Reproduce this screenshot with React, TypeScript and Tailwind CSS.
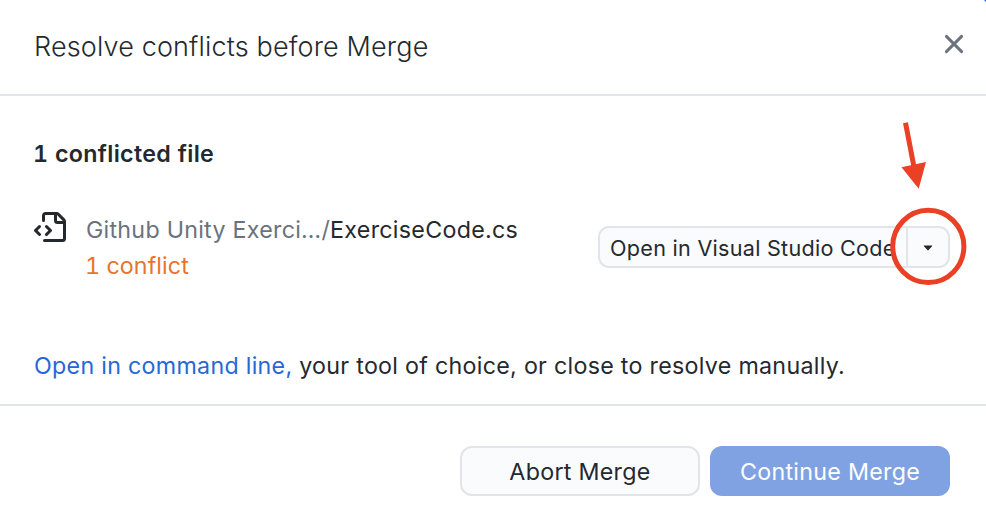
export default function App() {
  return (
    <main className="relative flex h-[530px] w-[986px] flex-col overflow-hidden bg-white font-['Inter',sans-serif] text-[23.25px] leading-[36px] tracking-[0.28px] text-[#24292e]">
      <header className="flex h-[96px] shrink-0 items-center justify-between border-b-2 border-[#e1e4e8] pr-[22px] pl-[34px]">
        <h1 className="text-[27px] font-[350] tracking-[0.15px] whitespace-nowrap">Resolve conflicts before Merge</h1>
        <button aria-label="Close" className="-mt-1.5 flex size-5 items-center justify-center">
          <svg viewBox="0 0 20 20" className="size-5" fill="none" stroke="#6a737d" strokeWidth="2.9" strokeLinecap="round"><path d="M2.4 2.4L17.6 17.6M17.6 2.4L2.4 17.6" /></svg>
        </button>
      </header>
      <section className="flex h-[310px] shrink-0 flex-col border-b-2 border-[#e1e4e8] pt-[40px] pr-[36px] pl-[34px]">
        <h2 className="-ml-px font-semibold tracking-[0.33px] whitespace-nowrap tabular-nums">1 conflicted file</h2>
        <div className="mt-[40px] flex h-[72px]">
          <svg viewBox="0 0 16 16" className="size-8 shrink-0" fill="#24292e">
            <path fillRule="evenodd" d="M4 1.75C4 .784 4.784 0 5.75 0h5.586c.464 0 .909.184 1.237.513l2.914 2.914c.329.328.513.773.513 1.237v8.586A1.75 1.75 0 0114.25 15h-9a.75.75 0 010-1.5h9a.25.25 0 00.25-.25V6h-2.75A1.75 1.75 0 0110 4.25V1.5H5.75a.25.25 0 00-.25.25v2.5a.75.75 0 01-1.5 0v-2.5zm7.5-.188V4.25c0 .138.112.25.25.25h2.688z" />
            <path d="M5.72 6.72a.75.75 0 000 1.06l1.47 1.47-1.47 1.47a.75.75 0 101.06 1.06l2-2a.75.75 0 000-1.06l-2-2a.75.75 0 00-1.06 0zM3.28 7.78a.75.75 0 00-1.06-1.06l-2 2a.75.75 0 000 1.06l2 2a.75.75 0 001.06-1.06L1.81 9.25l1.47-1.47z" />
          </svg>
          <div className="ml-5 flex flex-col whitespace-nowrap">
            <p><span className="tracking-[0.26px] text-[#6a737d]">Github Unity Exerci…/</span>ExerciseCode.cs</p>
            <p className="-ml-px tracking-[0.08px] text-[#e8742c] tabular-nums">1 conflict</p>
          </div>
          <div className="mt-[14px] ml-auto flex h-[42px] w-[352px] rounded-[11px] border-2 border-[#e1e4e8] bg-[#fafbfc] text-[21.6px] tracking-[0.27px]">
            <span className="flex w-[306px] items-center overflow-hidden pt-[2px] pl-[10px] whitespace-nowrap">Open in Visual Studio Code</span>
            <span className="flex flex-1 items-center justify-center border-l-2 border-[#e1e4e8] pt-[2px] pr-px">
              <svg viewBox="0 0 10 6" className="h-[6px] w-[10px]"><path d="M1.2.5h7.6q1 0 .3.7L5.6 4.9q-.6.6-1.2 0L.9 1.2Q.2.5 1.2.5z" fill="#24292e" /></svg>
            </span>
          </div>
        </div>
        <p className="mt-[64px] whitespace-nowrap"><span className="text-[#2768d5]">Open in command line,</span> your tool of choice, or close to resolve manually.</p>
      </section>
      <footer className="flex justify-end gap-[10px] pt-[40px] pr-[36px]">
        <button className="h-[50px] w-[240px] rounded-[12px] border-2 border-[#e1e4e8] bg-[#fafbfc] pt-[2px]">Abort Merge</button>
        <button className="h-[50px] w-[240px] rounded-[12px] bg-[#80a2e2] pt-[2px] text-white">Continue Merge</button>
      </footer>
      <svg viewBox="0 0 100 180" className="absolute top-[115px] left-[880px] h-[180px] w-[100px]">
        <ellipse cx="48.3" cy="131.4" rx="35.6" ry="36.1" fill="none" stroke="#ea4025" strokeWidth="5" />
        <path d="M25.5 7.7L33.8 51" stroke="#ea4025" strokeWidth="5" />
        <path d="M21.5 52.3L46 47l-7.3 26.8z" fill="#ea4025" />
      </svg>
      <svg viewBox="0 0 2 2" className="absolute top-0 right-0 size-0.5"><path d="M0 0h2v2z" fill="#2768d5" /></svg>
    </main>
  );
}
